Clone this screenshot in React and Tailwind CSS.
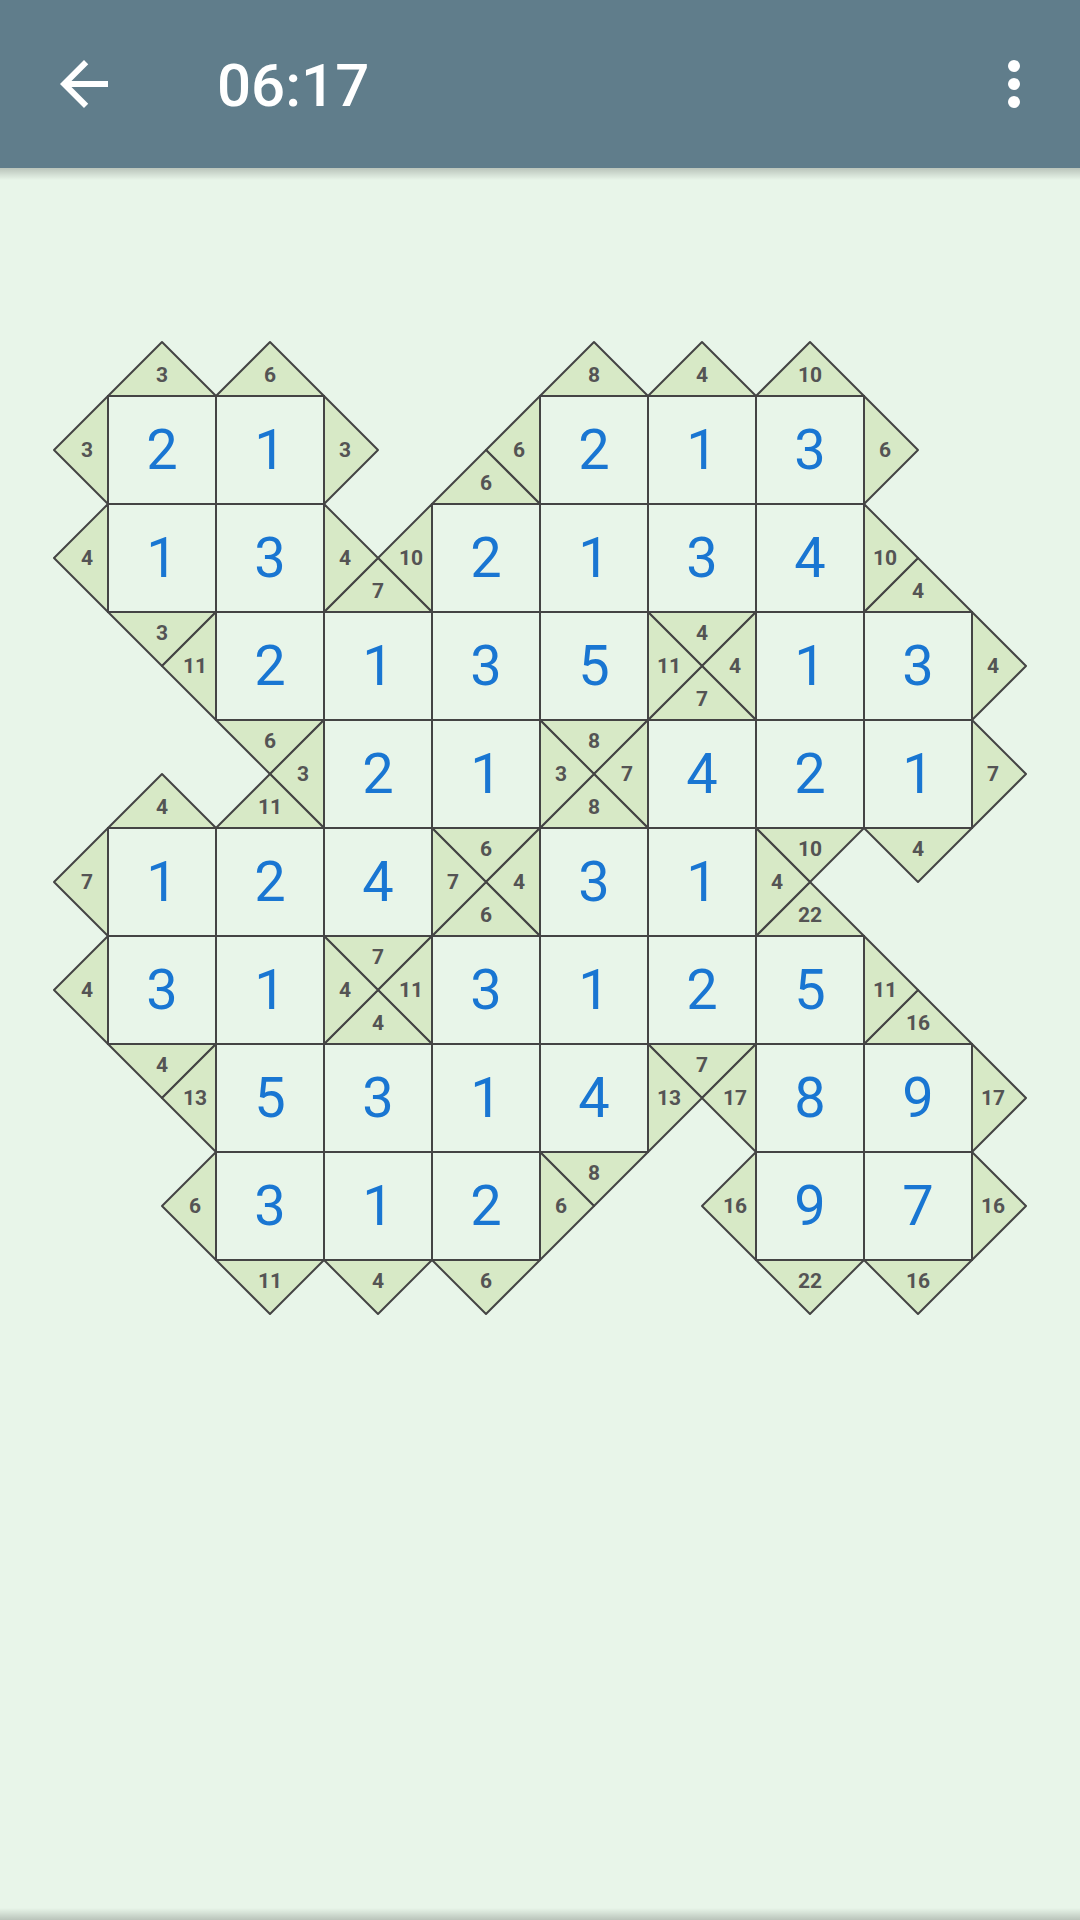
import React from "react";

// board: number = filled cell, object = clue cell (t/r/b/l triangles), null = empty
const board = [
  [null, { b: 3 }, { b: 6 }, null, null, { b: 8 }, { b: 4 }, { b: 10 }, null, null],
  [{ r: 3 }, 2, 1, { l: 3 }, { r: 6, b: 6 }, 2, 1, 3, { l: 6 }, null],
  [{ r: 4 }, 1, 3, { l: 4, b: 7, r: 10 }, 2, 1, 3, 4, { l: 10, b: 4 }, null],
  [null, { t: 3, r: 11 }, 2, 1, 3, 5, { t: 4, l: 11, r: 4, b: 7 }, 1, 3, { l: 4 }],
  [null, { b: 4 }, { t: 6, r: 3, b: 11 }, 2, 1, { t: 8, l: 3, r: 7, b: 8 }, 4, 2, 1, { l: 7 }],
  [{ r: 7 }, 1, 2, 4, { t: 6, l: 7, r: 4, b: 6 }, 3, 1, { t: 10, l: 4, b: 22 }, { t: 4 }, null],
  [{ r: 4 }, 3, 1, { t: 7, l: 4, r: 11, b: 4 }, 3, 1, 2, 5, { l: 11, b: 16 }, null],
  [null, { t: 4, r: 13 }, 5, 3, 1, 4, { t: 7, l: 13, r: 17 }, 8, 9, { l: 17 }],
  [null, { r: 6 }, 3, 1, 2, { t: 8, l: 6 }, { r: 16 }, 9, 7, { l: 16 }],
  [null, null, { t: 11 }, { t: 4 }, { t: 6 }, null, null, { t: 22 }, { t: 16 }, null],
];

const tri = {
  t: "0,0 108,0 54,54",
  r: "108,0 108,108 54,54",
  b: "0,108 108,108 54,54",
  l: "0,0 0,108 54,54",
};

const labelPos = {
  t: "left-[34px] top-[1px]",
  r: "left-[67px] top-[34px]",
  b: "left-[34px] top-[67px]",
  l: "left-[1px] top-[34px]",
};

function ClueCell({ clue }) {
  const sides = ["t", "r", "b", "l"].filter((s) => clue[s] != null);
  return (
    <div className="relative h-[108px] w-[108px]">
      <svg viewBox="0 0 108 108" className="absolute inset-0 h-full w-full overflow-visible">
        {sides.map((s) => (
          <polygon
            key={s}
            points={tri[s]}
            fill="#d7e9c6"
            stroke="#444444"
            strokeWidth="2"
            strokeLinejoin="round"
          />
        ))}
      </svg>
      {sides.map((s) => (
        <span
          key={s}
          className={`absolute flex h-[40px] w-[40px] items-center justify-center text-[21px] font-bold leading-none text-[#545454] ${labelPos[s]}`}
        >
          {clue[s]}
        </span>
      ))}
    </div>
  );
}

function NumberCell({ value }) {
  return (
    <div className="flex h-[108px] w-[108px] items-center justify-center text-[56px] leading-none text-[#1976d2] outline-2 -outline-offset-1 outline-[#444444]">
      {value}
    </div>
  );
}

export default function App() {
  return (
    <div className="relative flex h-[1920px] w-[1080px] flex-col bg-[#e8f5e9] font-['Roboto',sans-serif]">
      <header className="relative z-10 flex h-[168px] shrink-0 items-center bg-[#607d8b] text-white">
        <svg viewBox="0 0 24 24" className="ml-[48px] h-[72px] w-[72px]" fill="white">
          <path d="M20 11H7.83l5.59-5.59L12 4l-8 8 8 8 1.41-1.41L7.83 13H20v-2z" />
        </svg>
        <span className="ml-[97px] pt-[4px] text-[60px] font-medium leading-none">06:17</span>
        <div className="ml-auto mr-[60px] flex flex-col gap-[6px]">
          <span className="h-[12px] w-[12px] rounded-full bg-white" />
          <span className="h-[12px] w-[12px] rounded-full bg-white" />
          <span className="h-[12px] w-[12px] rounded-full bg-white" />
        </div>
        <div className="absolute left-0 right-0 top-full h-3 bg-linear-to-b from-black/20 to-transparent" />
      </header>

      <main className="flex-1 pt-[120px]">
        <div className="grid grid-cols-[repeat(10,108px)] grid-rows-[repeat(10,108px)]">
          {board.flatMap((row, r) =>
            row.map((cell, c) => {
              const key = `${r}-${c}`;
              if (cell == null) return <div key={key} />;
              if (typeof cell === "number") return <NumberCell key={key} value={cell} />;
              return <ClueCell key={key} clue={cell} />;
            })
          )}
        </div>
      </main>

      <div className="h-3 shrink-0 bg-linear-to-b from-transparent to-black/20" />
    </div>
  );
}
